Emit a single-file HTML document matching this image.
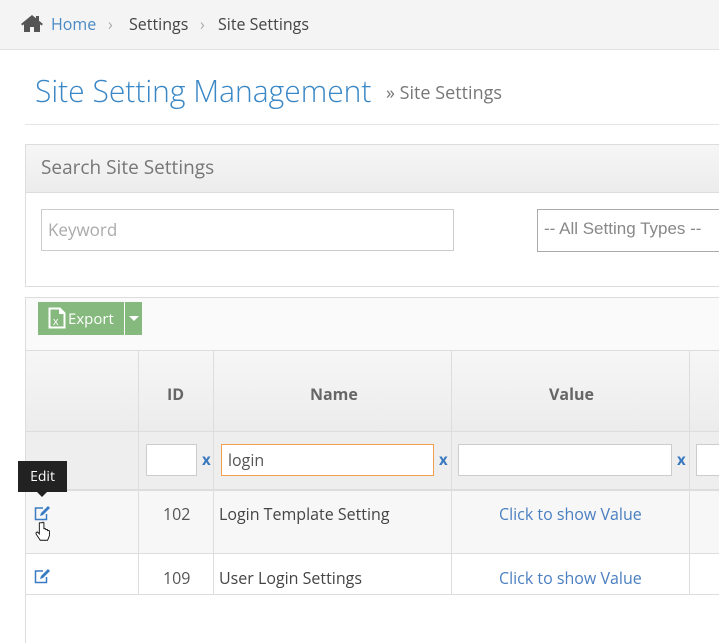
<!DOCTYPE html><html><head><style>
*{margin:0;padding:0;box-sizing:border-box}
html,body{width:719px;height:643px;overflow:hidden}
body{background:#fff;font-family:"Open Sans","Liberation Sans",sans-serif;position:relative;color:#555}
.a{position:absolute}
.bc{left:0;top:0;width:719px;height:50px;background:#f4f4f4;border-bottom:1px solid #e2e2e2}
.inp{background:#fff;border:1px solid #ccc}
.hd{background:linear-gradient(#f6f6f6,#ececec)}
.vl{width:1px;background:#ddd}
.hl{height:1px;background:#ddd}
.x{color:#3a79c0;font-weight:bold;font-size:15px}
</style></head><body>
<div class="a bc"></div>
<svg class="a" style="left:21px;top:14px" width="22" height="18" viewBox="0 0 22 18"><path d="M11 1L0 10l1.5 1.5L3 10.3V18h6v-5h4v5h6v-7.7l1.5 1.2L22 10 18 6.7V2h-3v2.2z" fill="#555"/></svg>
<div class="a" style="left:51px;top:13px;font-size:16px;color:#4a8ac4">Home</div>
<div class="a" style="left:108px;top:13px;font-size:16px;color:#aaa">›</div>
<div class="a" style="left:129px;top:13px;font-size:16px;color:#444">Settings</div>
<div class="a" style="left:200px;top:13px;font-size:16px;color:#aaa">›</div>
<div class="a" style="left:218px;top:13px;font-size:16px;color:#444">Site Settings</div>
<div class="a" style="left:35px;top:70px;font-size:30px;color:#3a87c6;font-weight:300">Site Setting Management</div>
<div class="a" style="left:386px;top:81px;font-size:18px;color:#777">» Site Settings</div>
<div class="a hl" style="left:25px;top:124px;width:694px;background:#e5e5e5"></div>

<div class="a" style="left:25px;top:144px;width:694px;height:143px;border:1px solid #ddd;border-right:0"></div>
<div class="a hd" style="left:26px;top:145px;width:693px;height:48px;border-bottom:1px solid #ddd"></div>
<div class="a" style="left:41px;top:154px;font-size:19px;color:#777">Search Site Settings</div>
<div class="a inp" style="left:41px;top:209px;width:413px;height:42px"></div>
<div class="a" style="left:48px;top:218px;font-size:17px;color:#aaa">Keyword</div>
<div class="a" style="left:537px;top:209px;width:182px;height:43px;border:1px solid #aaa;border-right:0;background:#fff"></div>
<div class="a" style="left:544px;top:219px;font-size:17px;color:#888;font-family:'Liberation Sans',sans-serif">-- All Setting Types --</div>

<div class="a" style="left:25px;top:297px;width:694px;height:346px;border:1px solid #ddd;border-right:0;border-bottom:0"></div>
<div class="a" style="left:26px;top:298px;width:693px;height:52px;background:#fafafa"></div>
<div class="a" style="left:38px;top:302px;width:86px;height:33px;background:#86b97e"></div>
<div class="a" style="left:125px;top:302px;width:17px;height:33px;background:#86b97e"></div>
<svg class="a" style="left:48px;top:307px" width="18" height="22" viewBox="0 0 18 22"><path d="M1 1h11l5 5v15H1z" fill="#fff" stroke="#fff"/><path d="M2.5 2.5h8.5v4.5h4.5v12.5H2.5z" fill="#86b97e"/><text x="5" y="18" font-size="11" fill="#fff" font-family="Liberation Sans">x</text></svg>
<div class="a" style="left:68px;top:309px;font-size:15px;color:#fff">Export</div>
<div class="a" style="left:129px;top:316px;border-left:5px solid transparent;border-right:5px solid transparent;border-top:5px solid #fff"></div>

<div class="a hd" style="left:26px;top:351px;width:693px;height:80px"></div>
<div class="a" style="left:26px;top:432px;width:693px;height:57px;background:#eee"></div>
<div class="a" style="left:26px;top:491px;width:693px;height:62px;background:#f7f7f7"></div>
<div class="a hl" style="left:26px;top:350px;width:693px"></div>
<div class="a hl" style="left:26px;top:431px;width:693px"></div>
<div class="a hl" style="left:26px;top:489px;width:693px;height:2px"></div>
<div class="a hl" style="left:26px;top:553px;width:693px"></div>
<div class="a hl" style="left:26px;top:594px;width:693px"></div>
<div class="a vl" style="left:138px;top:351px;height:243px"></div>
<div class="a vl" style="left:213px;top:351px;height:243px"></div>
<div class="a vl" style="left:451px;top:351px;height:243px"></div>
<div class="a vl" style="left:689px;top:351px;height:243px"></div>
<div class="a" style="left:167px;top:383px;font-size:16px;font-weight:bold;color:#666">ID</div>
<div class="a" style="left:310px;top:383px;font-size:16px;font-weight:bold;color:#666">Name</div>
<div class="a" style="left:549px;top:383px;font-size:16px;font-weight:bold;color:#666">Value</div>
<div class="a inp" style="left:146px;top:444px;width:51px;height:32px"></div>
<div class="a x" style="left:202px;top:450px">x</div>
<div class="a" style="left:221px;top:444px;width:213px;height:32px;border:1px solid #f0a050;background:#fff"></div>
<div class="a" style="left:228px;top:449px;font-size:16px;color:#555">login</div>
<div class="a x" style="left:439px;top:450px">x</div>
<div class="a inp" style="left:458px;top:444px;width:214px;height:32px"></div>
<div class="a x" style="left:677px;top:450px">x</div>
<div class="a inp" style="left:696px;top:444px;width:23px;height:32px;border-right:0"></div>

<div class="a" style="left:163px;top:503px;font-size:16px;color:#555">102</div>
<div class="a" style="left:219px;top:503px;font-size:16px;color:#444">Login Template Setting</div>
<div class="a" style="left:499px;top:503px;font-size:16px;color:#4a7fc0">Click to show Value</div>
<div class="a" style="left:163px;top:567px;font-size:16px;color:#555">109</div>
<div class="a" style="left:219px;top:567px;font-size:16px;color:#444">User Login Settings</div>
<div class="a" style="left:499px;top:567px;font-size:16px;color:#4a7fc0">Click to show Value</div>

<svg class="a" style="left:34px;top:506px" width="18" height="15" viewBox="0 0 18 15"><path d="M9 2H1.5v11.5h11V8" fill="none" stroke="#3a7cc4" stroke-width="1.5"/><path d="M6 10l1-3 7-7 2 2-7 7z" fill="#3a7cc4"/></svg>
<svg class="a" style="left:34px;top:569px" width="18" height="15" viewBox="0 0 18 15"><path d="M9 2H1.5v11.5h11V8" fill="none" stroke="#3a7cc4" stroke-width="1.5"/><path d="M6 10l1-3 7-7 2 2-7 7z" fill="#3a7cc4"/></svg>
<svg class="a" style="left:34px;top:521px" width="18" height="22" viewBox="0 0 18 24"><path d="M5 2v12l-2-2c-2 0-2 2-1 3l4 6h8l2-5v-5c0-1-2-1-2 0v-1c0-1-2-1-2 0v-1c0-1-2-1-2 0V2c0-1-2-1-2 0z" fill="#fff" stroke="#111" stroke-width="1"/></svg>

<div class="a" style="left:18px;top:461px;width:49px;height:31px;background:#222;color:#fff;font-size:14px;text-align:center;line-height:31px">Edit</div>
<div class="a" style="left:37px;top:492px;border-left:5px solid transparent;border-right:5px solid transparent;border-top:5px solid #222"></div>
</body></html>
